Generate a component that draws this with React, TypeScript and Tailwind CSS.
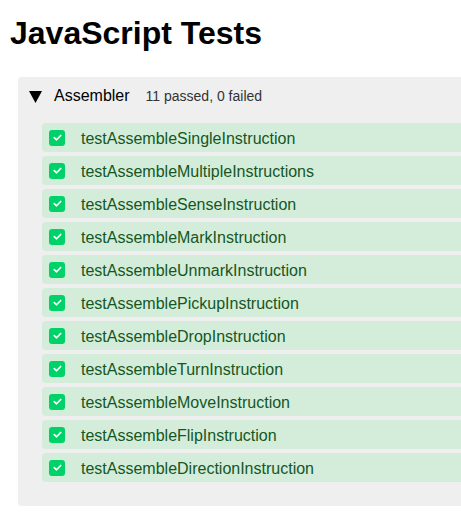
const tests = [
  "testAssembleSingleInstruction",
  "testAssembleMultipleInstructions",
  "testAssembleSenseInstruction",
  "testAssembleMarkInstruction",
  "testAssembleUnmarkInstruction",
  "testAssemblePickupInstruction",
  "testAssembleDropInstruction",
  "testAssembleTurnInstruction",
  "testAssembleMoveInstruction",
  "testAssembleFlipInstruction",
  "testAssembleDirectionInstruction"
]

function Check() {
  return (
    <span className="flex h-[16px] w-[16px] items-center justify-center rounded-[3px] bg-[#00d26a]">
      <svg width="11" height="11" viewBox="0 0 12 12" fill="none">
        <path d="M2.5 6.2 L5 8.5 L9.5 3.8" stroke="white" strokeWidth="1.8" strokeLinecap="round" strokeLinejoin="round" />
      </svg>
    </span>
  )
}

export default function App() {
  return (
    <div className="h-[521px] w-[461px] overflow-hidden bg-white px-[10px] pt-[15px] font-['Liberation_Sans',Arial,sans-serif] text-black">
      <h1 className="mb-[25px] text-[32px] font-bold leading-[37px]">JavaScript Tests</h1>
      <div className="ml-[8px] w-[470px] rounded-[4px] bg-[#efefef] pb-[24px] pl-[11px] pt-[9px]">
        <div className="flex h-[20px] items-center">
          <svg width="13" height="12" viewBox="0 0 13 12" className="mr-[12px] mt-[1px]">
            <path d="M0 0 H13 L6.5 12 Z" fill="black" />
          </svg>
          <span className="text-[16px]">Assembler</span>
          <span className="ml-[16px] pt-[1px] text-[14px] text-[#333]">11 passed, 0 failed</span>
        </div>
        <div className="ml-[13px] mt-[17px] flex flex-col gap-[4px]">
          {tests.map((t) => (
            <div key={t} className="flex h-[29px] items-center gap-[16px] rounded-[4px] bg-[#d4edda] pl-[7px]">
              <Check />
              <span className="pt-[2px] text-[16px] text-[#155724]">{t}</span>
            </div>
          ))}
        </div>
      </div>
    </div>
  )
}
